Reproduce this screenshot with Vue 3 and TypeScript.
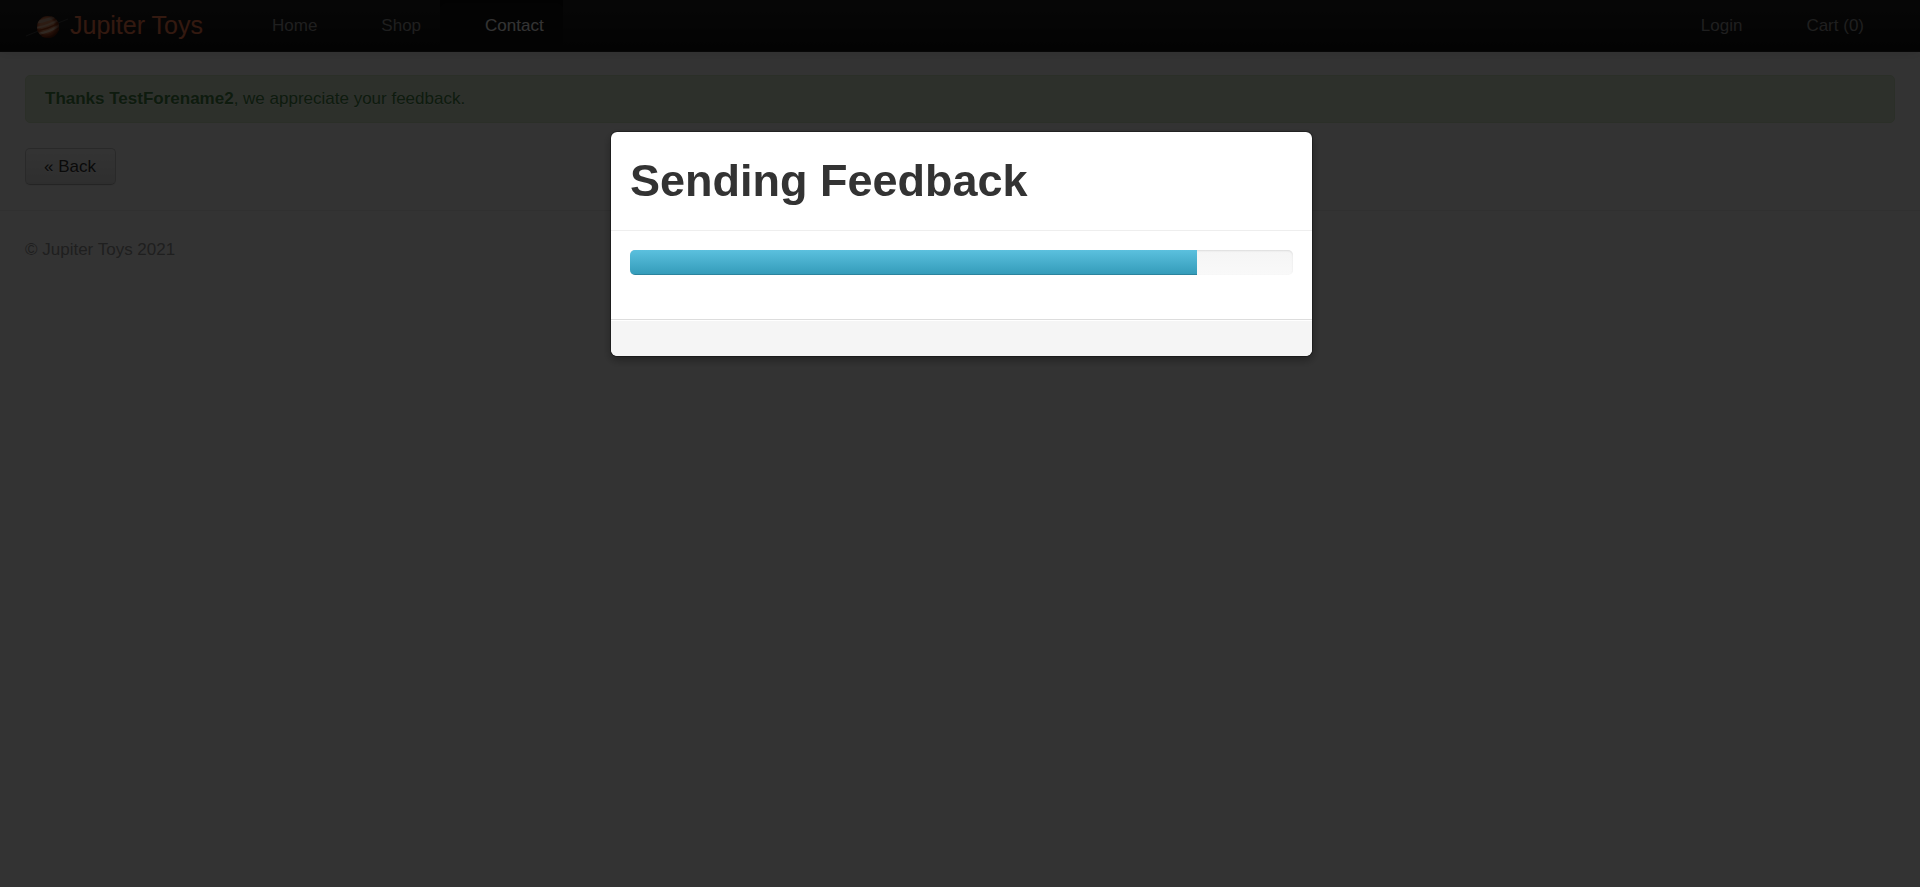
<script setup lang="ts">
interface NavItem {
  label: string
  active?: boolean
}

const mainLinks: NavItem[] = [
  { label: 'Home' },
  { label: 'Shop' },
  { label: 'Contact', active: true },
]
const userLinks: NavItem[] = [{ label: 'Login' }, { label: 'Cart (0)' }]
const forename = 'TestForename2'
const progress = 85.5
</script>

<template>
  <div class="page">
    <header class="navbar">
      <a class="brand" href="#">
        <svg class="logo" viewBox="0 0 44 24" aria-hidden="true">
          <defs>
            <radialGradient id="globe" cx="0.45" cy="0.42" r="0.58">
              <stop offset="0.5" stop-color="#e08a60" />
              <stop offset="0.8" stop-color="#b85028" />
              <stop offset="1" stop-color="#6c240c" />
            </radialGradient>
            <radialGradient id="shade" cx="0.42" cy="0.45" r="0.6">
              <stop offset="0.6" stop-color="#5c1c08" stop-opacity="0" />
              <stop offset="1" stop-color="#5c1c08" stop-opacity="0.9" />
            </radialGradient>
            <clipPath id="disc"><circle cx="23" cy="12" r="11" /></clipPath>
          </defs>
          <path d="M1 21 L43 4" stroke="#444" stroke-width="1" />
          <circle cx="23" cy="12" r="11" fill="url(#globe)" />
          <g clip-path="url(#disc)" fill="none">
            <path d="M12 7 Q22 6 31 1" stroke="#d0a890" stroke-width="3" />
            <path d="M10 13 Q23 11 35 4" stroke="#e8b898" stroke-width="2" />
            <path d="M11 16 Q24 14 35 7" stroke="#a84418" stroke-width="1.6" />
            <path d="M13 19 Q25 17 35 10" stroke="#f0c8a8" stroke-width="2.4" />
            <path d="M16 22 Q27 20 34 14" stroke="#b84c24" stroke-width="2" />
          </g>
          <circle cx="23" cy="12" r="11" fill="url(#shade)" />
        </svg>
        Jupiter Toys
      </a>
      <nav class="links">
        <a v-for="item in mainLinks" :key="item.label" href="#" :class="{ active: item.active }">{{ item.label }}</a>
      </nav>
      <nav class="links user">
        <a v-for="item in userLinks" :key="item.label" href="#">{{ item.label }}</a>
      </nav>
    </header>

    <main class="content">
      <div class="alert"><strong>Thanks {{ forename }}</strong>, we appreciate your feedback.</div>
      <button class="back" type="button">« Back</button>
    </main>

    <footer class="footer">© Jupiter Toys 2021</footer>

    <div class="backdrop">
      <section class="modal" role="dialog" aria-labelledby="modal-title">
        <div class="modal-header"><h1 id="modal-title">Sending Feedback</h1></div>
        <div class="modal-body">
          <div class="progress" role="progressbar" aria-labelledby="modal-title" :aria-valuenow="progress">
            <div class="bar" :style="{ width: progress + '%' }"></div>
          </div>
        </div>
        <div class="modal-footer"></div>
      </section>
    </div>
  </div>
</template>

<style>
body {
  margin: 0;
  background: #fff;
}
</style>

<style scoped>
.page {
  font: 17px/25px "Liberation Sans", Arial, sans-serif;
  color: #333;
}
.navbar {
  display: flex;
  align-items: stretch;
  box-sizing: border-box;
  height: 52px;
  padding: 0 37px 0 25px;
  background: linear-gradient(#222, #111);
  border-bottom: 1px solid #252525;
  box-shadow: 0 1px 12px rgba(0, 0, 0, 0.1);
}
.brand {
  display: flex;
  align-items: center;
  width: 202px;
  font-size: 25px;
  color: coral;
  text-decoration: none;
}
.logo {
  width: 44px;
  height: 24px;
  margin: 3px 1px 0 0;
}
.links {
  display: flex;
}
.links a {
  padding: 13px 19px 13px 45px;
  color: #999;
  text-decoration: none;
}
.links a.active {
  color: #fff;
  background: #111;
  box-shadow: inset 0 4px 10px rgba(0, 0, 0, 0.2);
}
.user {
  margin-left: auto;
}
.content {
  padding: 23px 25px 25px;
}
.alert {
  padding: 10px 43px 11px 19px;
  margin-bottom: 25px;
  color: #468847;
  text-shadow: 0 1px 0 rgba(255, 255, 255, 0.5);
  background: #dff0d8;
  border: 1px solid #d6e9c6;
  border-radius: 5px;
}
.back {
  display: block;
  padding: 5px 19px 5px 18px;
  font: inherit;
  color: #333;
  text-shadow: 0 1px 1px rgba(255, 255, 255, 0.75);
  background: linear-gradient(#fff, #e6e6e6);
  border: 1px solid #bbb;
  border-color: #ccc #ccc #b3b3b3;
  border-radius: 5px;
  box-shadow: inset 0 1px 0 rgba(255, 255, 255, 0.2), 0 1px 2px rgba(0, 0, 0, 0.05);
}
.footer {
  padding: 26px 25px;
  border-top: 1px solid #eee;
  color: #999;
}
.backdrop {
  position: fixed;
  inset: 0;
  display: flex;
  justify-content: center;
  align-items: flex-start;
  padding-top: 131px;
  background: rgba(0, 0, 0, 0.8);
}
.modal {
  width: 701px;
  margin-left: 3px;
  background: #fff;
  background-clip: padding-box;
  border: 1px solid rgba(0, 0, 0, 0.3);
  border-radius: 7px;
  box-shadow: 0 4px 9px rgba(0, 0, 0, 0.3);
}
.modal-header {
  padding: 24px 19px;
  border-bottom: 1px solid #eee;
}
.modal-header h1 {
  margin: 0;
  font-size: 45px;
  line-height: 50px;
}
.modal-body {
  padding: 19px 19px 44px;
}
.progress {
  height: 25px;
  overflow: hidden;
  background: linear-gradient(#f5f5f5, #f9f9f9);
  border-radius: 5px;
  box-shadow: inset 0 1px 2px rgba(0, 0, 0, 0.1);
}
.bar {
  height: 100%;
  background: linear-gradient(#5bc0de, #339bb9);
  box-shadow: inset 0 -1px 0 rgba(0, 0, 0, 0.15);
}
.modal-footer {
  height: 36px;
  background: #f5f5f5;
  border-top: 1px solid #ddd;
  border-radius: 0 0 7px 7px;
  box-shadow: inset 0 1px 0 #fff;
}
</style>
